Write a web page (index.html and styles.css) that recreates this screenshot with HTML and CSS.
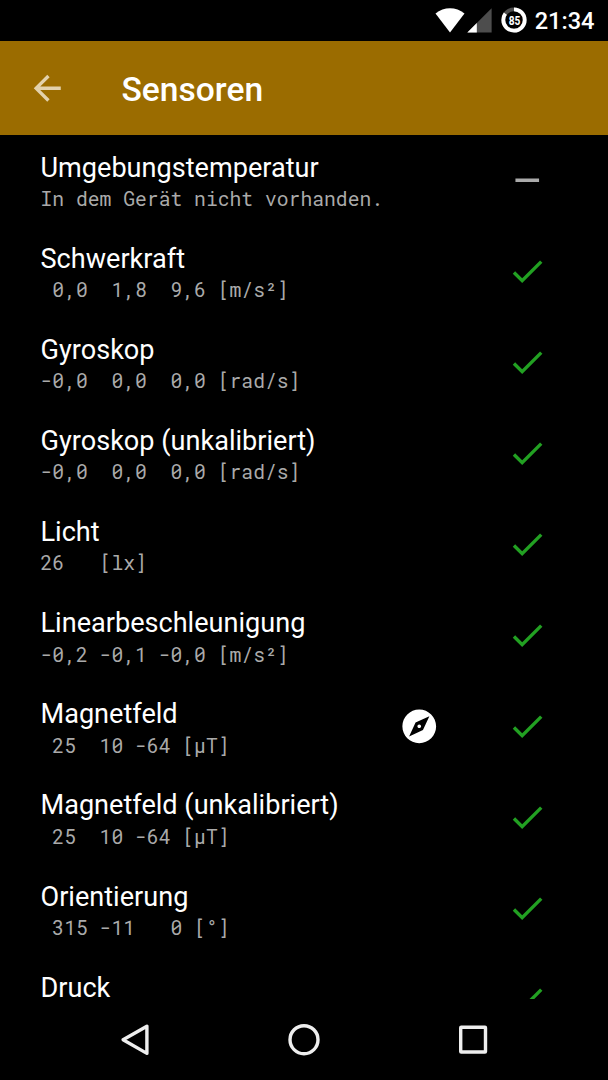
FILE: index.html
```html
<!DOCTYPE html>
<html lang="de">
<head>
  <meta charset="UTF-8" />
  <meta name="viewport" content="width=device-width, initial-scale=1.0">
  <title>Sensoren</title>
  <link rel="stylesheet" href="styles.css">
</head>
<body>
  <svg class="symbols" width="0" height="0">
    <symbol id="check" viewBox="0 0 24 24"><path d="M9 16.17L4.83 12l-1.42 1.41L9 19 21 7l-1.41-1.41z"/></symbol>
    <symbol id="minus" viewBox="0 0 24 24"><path d="M19 13H5v-2h14z"/></symbol>
    <symbol id="compass" viewBox="0 0 24 24"><path d="M12 10.9c-.61 0-1.1.49-1.1 1.1s.49 1.1 1.1 1.1c.61 0 1.1-.49 1.1-1.1s-.49-1.1-1.1-1.1zM12 2C6.48 2 2 6.48 2 12s4.48 10 10 10 10-4.48 10-10S17.52 2 12 2zm2.19 12.19L6 18l3.81-8.19L18 6l-3.81 8.19z"/></symbol>
  </svg>

  <div class="status-bar">
    <svg class="wifi" width="30" height="25" viewBox="0 0 30 25"><path d="M15 24.5L.5 5.5C9 -1.4 21 -1.4 29.5 5.5z" fill="#fff"/></svg>
    <svg class="signal" width="25" height="25" viewBox="0 0 25 25">
      <path d="M.3 24.6L24.6 .3v24.3z" fill="#4d4d4d"/>
      <path d="M.3 24.6L9.8 15.1v9.5z" fill="#fff"/>
    </svg>
    <div class="battery">
      <svg width="26" height="26" viewBox="0 0 26 26">
        <circle cx="13" cy="13" r="10.7" fill="none" stroke="#4d4d4d" stroke-width="3.8"/>
        <circle cx="13" cy="13" r="10.7" fill="none" stroke="#fff" stroke-width="3.8" pathLength="100" stroke-dasharray="85 15" transform="rotate(-90 13 13)"/>
      </svg>
      <span class="level">85</span>
    </div>
    <span class="clock">21:34</span>
  </div>

  <header class="toolbar">
    <svg class="back" viewBox="0 0 24 24"><path d="M20 11H7.83l5.59-5.59L12 4l-8 8 8 8 1.41-1.41L7.83 13H20v-2z"/></svg>
    <h1>Sensoren</h1>
  </header>

  <ul class="sensors">
    <li>
      <div class="info"><h2>Umgebungstemperatur</h2><p>In dem Gerät nicht vorhanden.</p></div>
      <svg class="icon missing"><use href="#minus"/></svg>
    </li>
    <li>
      <div class="info"><h2>Schwerkraft</h2><p> 0,0  1,8  9,6 [m/s²]</p></div>
      <svg class="icon ok"><use href="#check"/></svg>
    </li>
    <li>
      <div class="info"><h2>Gyroskop</h2><p>-0,0  0,0  0,0 [rad/s]</p></div>
      <svg class="icon ok"><use href="#check"/></svg>
    </li>
    <li>
      <div class="info"><h2>Gyroskop (unkalibriert)</h2><p>-0,0  0,0  0,0 [rad/s]</p></div>
      <svg class="icon ok"><use href="#check"/></svg>
    </li>
    <li>
      <div class="info"><h2>Licht</h2><p>26   [lx]</p></div>
      <svg class="icon ok"><use href="#check"/></svg>
    </li>
    <li>
      <div class="info"><h2>Linearbeschleunigung</h2><p>-0,2 -0,1 -0,0 [m/s²]</p></div>
      <svg class="icon ok"><use href="#check"/></svg>
    </li>
    <li>
      <div class="info"><h2>Magnetfeld</h2><p> 25  10 -64 [µT]</p></div>
      <svg class="icon compass"><use href="#compass"/></svg>
      <svg class="icon ok"><use href="#check"/></svg>
    </li>
    <li>
      <div class="info"><h2>Magnetfeld (unkalibriert)</h2><p> 25  10 -64 [µT]</p></div>
      <svg class="icon ok"><use href="#check"/></svg>
    </li>
    <li>
      <div class="info"><h2>Orientierung</h2><p> 315 -11   0 [°]</p></div>
      <svg class="icon ok"><use href="#check"/></svg>
    </li>
    <li>
      <div class="info"><h2>Druck</h2></div>
      <svg class="icon ok"><use href="#check"/></svg>
    </li>
  </ul>

  <nav class="nav-bar">
    <svg viewBox="0 0 40 40"><path d="M31.9 6.2v27.2L8.1 19.7z"/></svg>
    <svg viewBox="0 0 40 40"><circle cx="20" cy="19.7" r="14"/></svg>
    <svg viewBox="0 0 40 40"><rect x="7.7" y="7.2" width="24.8" height="24.8" rx="0.5"/></svg>
  </nav>
</body>
</html>
```
FILE: styles.css
```css
* {
  box-sizing: border-box;
}

body {
  font-family: Roboto, sans-serif;
  background-color: #000;
  color: #fff;
  margin: 0;
  height: 1080px;
  overflow: hidden;
  display: flex;
  flex-direction: column;
}

h1, h2, p {
  margin: 0;
}

.symbols {
  position: absolute;
}

.status-bar {
  height: 40.5px;
  flex: none;
  display: flex;
  align-items: center;
  justify-content: flex-end;
  padding-right: 13.5px;
}

.signal {
  margin: 0 9px 0 2px;
}

.battery {
  display: grid;
  place-items: center;
  margin-right: 7.5px;
}

.battery svg,
.battery .level {
  grid-area: 1 / 1;
}

.level {
  font-size: 13px;
  font-weight: 700;
  line-height: 13px;
  padding-top: 1px;
  transform: scaleX(0.78);
}

.clock {
  font-size: 23.6px;
  font-weight: 500;
  line-height: 41px;
  padding-top: 3px;
}

.toolbar {
  height: 94.5px;
  flex: none;
  display: flex;
  align-items: center;
  background-color: #9b6c00;
  padding-left: 27px;
}

.back {
  width: 40.5px;
  height: 40.5px;
  margin: 0 54px 0 0;
  fill: #e3d2ad;
}

.toolbar h1 {
  font-size: 33.6px;
  font-weight: 500;
  line-height: 40px;
  padding-top: 4px;
}

.sensors {
  list-style: none;
  margin: 0;
  padding: 0;
  flex: 1;
  min-height: 0;
  overflow: hidden;
}

.sensors li {
  display: flex;
  align-items: flex-start;
  height: 91.1px;
  padding: 16.8px 60.5px 0 40.5px;
}

.info {
  flex: 1;
}

.info h2 {
  font-size: 27.1px;
  font-weight: 400;
  line-height: 32px;
}

.info p {
  font-family: "Roboto Mono", "DejaVu Sans Mono", monospace;
  font-size: 19.7px;
  line-height: 26px;
  padding-top: 1.3px;
  color: #aaa;
  white-space: pre;
}

.icon {
  width: 40.5px;
  height: 40.5px;
  margin: 7.8px 0.5px 0 -0.5px;
}

.ok {
  fill: #22a022;
}

.missing {
  fill: #aaa;
}

.compass {
  fill: #fff;
  margin-right: 68px;
}

.nav-bar {
  height: 81px;
  flex: none;
  display: flex;
  justify-content: center;
  align-items: center;
  gap: 129px;
}

.nav-bar svg {
  width: 40px;
  height: 40px;
  fill: none;
  stroke: #eee;
  stroke-width: 3.4;
  stroke-linejoin: round;
}
```
